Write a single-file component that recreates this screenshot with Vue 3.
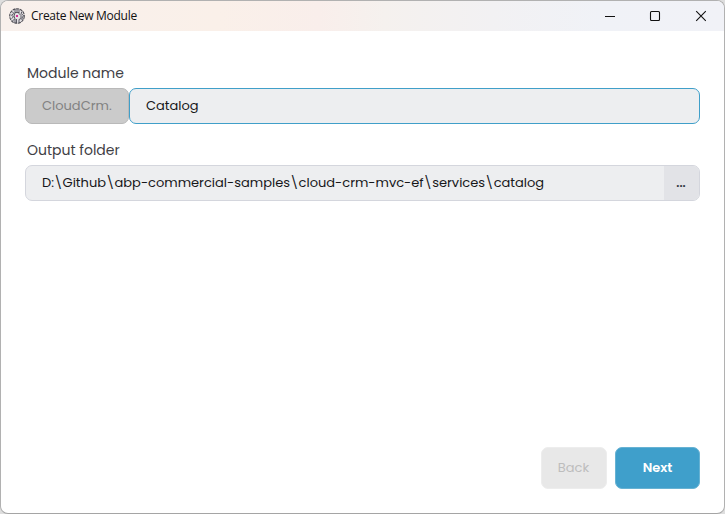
<script setup>
import { ref } from 'vue'

const prefix = 'CloudCrm.'
const moduleName = ref('Catalog')
const folder = ref('D:\\Github\\abp-commercial-samples\\cloud-crm-mvc-ef\\services\\catalog')
</script>

<template>
  <div class="window">
    <header class="titlebar">
      <svg class="logo" viewBox="0 0 16 16">
        <circle cx="8" cy="8" r="7.3" fill="#e4e1e4" stroke="#4c4b52" stroke-width="1.1" stroke-dasharray="3 .7" />
        <path d="M3 3.500l2 2-2.500 1.500 2 2-2 1.500M6 1v4l-1 3 1 3v4M8 1v3M10 1.500v4l2 2v3l-2 1v3M13 3.500l-1 2 2.500 2-1.500 2.500v2M3.500 13l2-2M7.500 11v4M6 4.500h4" fill="none" stroke="#4b4b55" stroke-width=".9" />
        <rect x="7" y="7" width="2" height="2" fill="#d42d95" />
      </svg>
      <span class="title">Create New Module</span>
      <div class="controls">
        <svg viewBox="0 0 12 12"><path d="M1 6.500h10" /></svg>
        <svg viewBox="0 0 12 12"><rect x="1.500" y="1.500" width="9" height="9" rx="1" /></svg>
        <svg viewBox="0 0 12 12"><path d="M1.200 1.200l9.600 9.600M10.800 1.200l-9.600 9.600" /></svg>
      </div>
    </header>
    <main class="body">
      <label class="label">Module name</label>
      <div class="row">
        <div class="field prefix">{{ prefix }}</div>
        <div class="field name">{{ moduleName }}</div>
      </div>
      <label class="label second">Output folder</label>
      <div class="field folder">
        <span>{{ folder }}</span>
        <button class="browse">...</button>
      </div>
    </main>
    <footer class="actions">
      <button class="btn back" disabled>Back</button>
      <button class="btn next">Next</button>
    </footer>
  </div>
</template>

<style>
body { background: #dedede; }
</style>

<style scoped>
.window {
  box-sizing: border-box;
  width: 725px;
  height: 514px;
  display: flex;
  flex-direction: column;
  border: 1px solid #b1b1b1;
  border-bottom-color: #a5a5a5;
  border-radius: 8px;
  background: #fff;
  overflow: hidden;
  font-family: Poppins, Inter, sans-serif;
  font-feature-settings: "cv11";
  font-size: 13px;
  color: #17171a;
}
.titlebar {
  height: 30px;
  display: flex;
  align-items: center;
  padding-left: 8px;
  background: linear-gradient(90deg, #f8f0ec 0, #faf0e9 30%, #f9eeeb 44%, #f5f1ee 53%, #f2f1f3 68%, #f0f2f7 83%, #f1f2f7 100%);
}
.logo { width: 16px; height: 16px; margin-right: 6px; }
.title {
  font: 12px/18px "Segoe UI", "Open Sans", sans-serif;
  letter-spacing: -0.28px;
  color: #111;
  flex: 1;
}
.controls { display: flex; padding-right: 17px; }
.controls svg { width: 12px; height: 12px; fill: none; stroke: #111; stroke-width: 1.1; }
.controls svg + svg { margin-left: 34px; }
.controls svg:first-child + svg { margin-left: 33px; }
.body { padding: 32px 24px 0; flex: 1; }
.label {
  display: block;
  height: 20px;
  line-height: 20px;
  margin: 0 0 5px 2px;
  font-size: 14px;
  color: #3f4045;
}
.second { margin-top: 16px; }
.row { display: flex; }
.field {
  box-sizing: border-box;
  height: 36px;
  display: flex;
  align-items: center;
  padding-left: 16px;
  background: #edeef0;
  border: 1px solid #d4d6dd;
  border-radius: 7px;
  white-space: nowrap;
}
.prefix { width: 104px; background: #cbcbcb; border-color: #b9b9b9; color: #828282; }
.name { flex: 1; border-color: #409fc9; }
.folder { overflow: hidden; justify-content: space-between; }
.browse {
  width: 35px;
  height: 34px;
  padding: 0 1px 0 0;
  border: 0;
  background: #e2e3e7;
  font: 600 12px/30px Poppins, Inter, sans-serif;
  color: #333640;
}
.actions { display: flex; justify-content: flex-end; gap: 8.5px; padding: 0 24px 24px 0; }
.btn {
  box-sizing: border-box;
  height: 42px;
  border-radius: 7px;
  padding: 0;
  font-family: inherit;
  font-feature-settings: inherit;
  font-size: 13px;
}
.back { width: 66px; border: 1px solid #ededed; background: #e8e8e8; color: #bdbdbd; }
.next { width: 85px; border: 1px solid #67b2d3; background: #3f9fcb; color: #fff; font-weight: 600; }
</style>
